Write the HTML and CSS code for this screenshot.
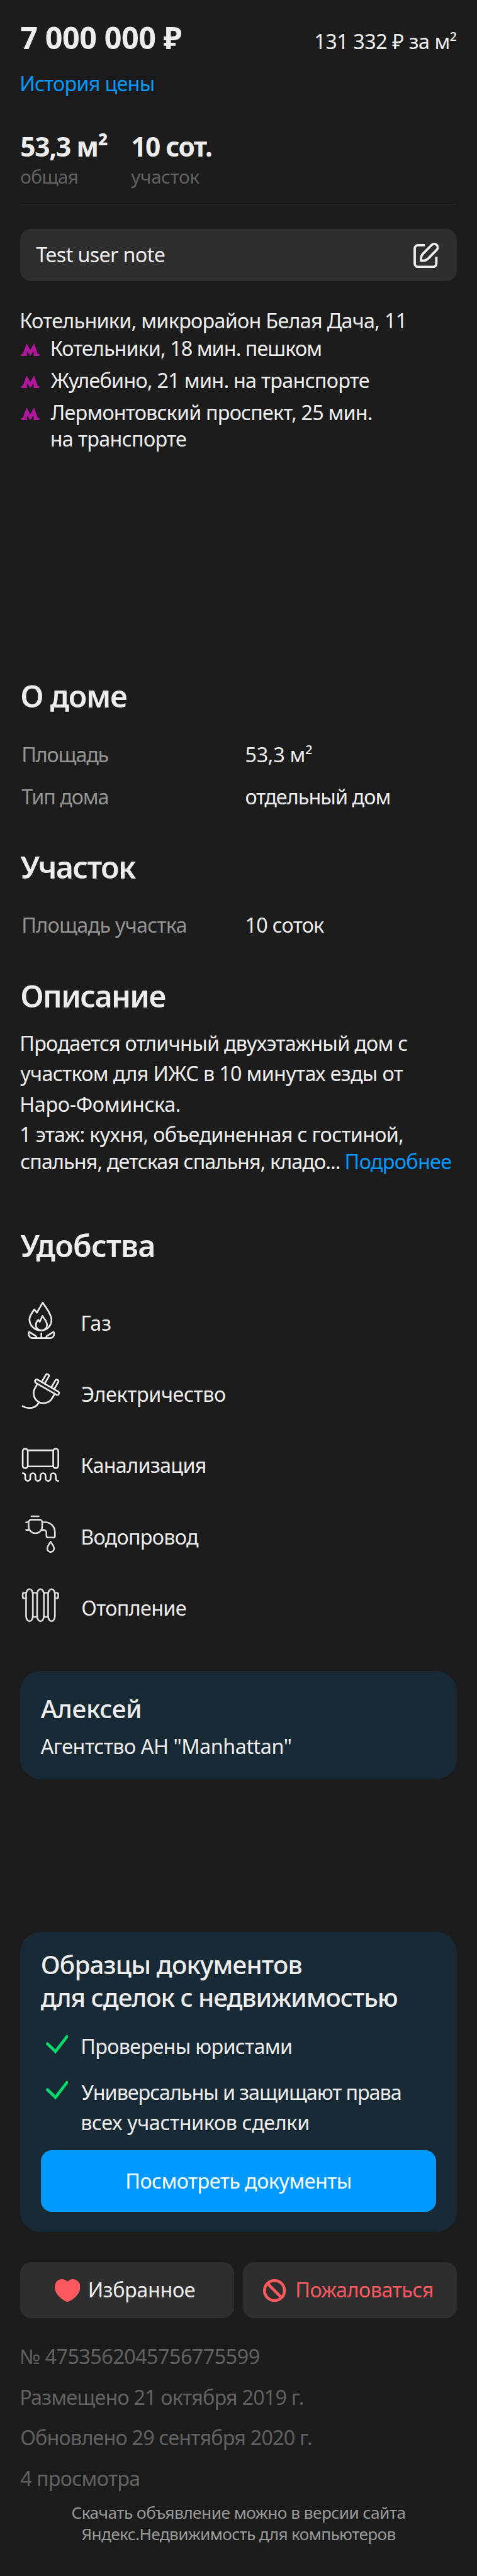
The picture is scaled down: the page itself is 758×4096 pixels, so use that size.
FILE: index.html
```html
<!DOCTYPE html>
<html lang="ru">
<head>
<meta charset="utf-8">
<title>Объявление</title>
<link rel="stylesheet" href="styles.css">
</head>
<body>
<main class="page">
  <header class="price-row">
    <h1 class="price k07">7 000 000 ₽</h1>
    <span class="rate k07">131 332 ₽ за м²</span>
  </header>
  <a class="history stem k11">История цены</a>
  <div class="facts">
    <div class="fact fact-area"><b class="fact-value k20">53,3 м²</b><span class="fact-label k11">общая</span></div>
    <div class="fact"><b class="fact-value k22">10 сот.</b><span class="fact-label k04">участок</span></div>
  </div>
  <div class="divider"></div>

  <div class="note">
    <span class="note-text k10">Test user note</span>
    <svg class="note-icon" viewBox="0 0 60 60" fill="none" stroke="#ededed" stroke-width="5.7"><path d="M26.7 5.8H11a8 8 0 0 0-8 8V49a8 8 0 0 0 8 8H46a8 8 0 0 0 8-8V33"/><path d="M43 5.2L22 26.5Q18 31 18 36V42H24.5Q29.5 42 33.7 38.2L54.8 17A8.3 8.3 0 0 0 43 5.2Z"/></svg>
  </div>

  <p class="address stem k11">Котельники, микрорайон Белая Дача, 11</p>
  <ul class="metros">
    <li class="metro"><svg class="metro-icon" viewBox="0 0 42 30" fill="#b2179e"><path d="M12.3 0L21 15.5 30 0 38.700 25H42V29.700H28.700V25H29.700L28 19 21 29.700 14 19 12.300 25H13.300V29.700H0V25H3.300Z"/></svg><span class="stem k14">Котельники, 18 мин. пешком</span></li>
    <li class="metro"><svg class="metro-icon" viewBox="0 0 42 30" fill="#b2179e"><path d="M12.3 0L21 15.5 30 0 38.700 25H42V29.700H28.700V25H29.700L28 19 21 29.700 14 19 12.300 25H13.300V29.700H0V25H3.300Z"/></svg><span class="k11">Жулебино, 21 мин. на транспорте</span></li>
    <li class="metro"><svg class="metro-icon" viewBox="0 0 42 30" fill="#b2179e"><path d="M12.3 0L21 15.5 30 0 38.700 25H42V29.700H28.700V25H29.700L28 19 21 29.700 14 19 12.300 25H13.300V29.700H0V25H3.300Z"/></svg><span><span class="k12">Лермонтовский проспект, 25 мин.</span><br><span class="stem k10">на транспорте</span></span></li>
  </ul>

  <section class="section section-house">
    <h2 class="k20">О доме</h2>
    <dl class="props">
      <dt class="k18">Площадь</dt><dd class="k04">53,3 м²</dd>
      <dt class="k16">Тип дома</dt><dd class="k14">отдельный дом</dd>
    </dl>
  </section>
  <section class="section">
    <h2 class="k25">Участок</h2>
    <dl class="props">
      <dt class="k11">Площадь участка</dt><dd class="k11">10 соток</dd>
    </dl>
  </section>
  <section class="section">
    <h2 class="k24">Описание</h2>
    <div class="desc">
      <p class="stem k11">Продается отличный двухэтажный дом с</p>
      <p class="k10">участком для ИЖС в 10 минутах езды от</p>
      <p class="stem k05">Наро-Фоминска.</p>
      <p class="stem k10">1 этаж: кухня, объединенная с гостиной,</p>
      <p class="desc-last"><span class="k13">спальня, детская спальня, кладо...</span> <a class="more k10">Подробнее</a></p>
    </div>
  </section>

  <section class="section section-amenities">
    <h2 class="k12">Удобства</h2>
    <ul class="amenities">
      <li class="amenity">
        <svg class="amenity-icon" viewBox="0 0 96 96"><path d="M53.4 6C58 15 74 33 74 46.5C74 62 62.5 72 49 72C34 72 22 60 22 46C22 38 27 31 33.4 22.5L39.5 30Z"/><path d="M52.7 37.5C56 44 63.5 51 63.5 59C63.5 66.5 58 72 50.5 72C43 72 37 66.5 37 59C37 54 39.5 50.5 42.7 47L46.3 51.5Z"/><path d="M38 88V86L23.5 76.5C21.5 75 20 76 20 78V80C20 86 24 90 30 90H70C76 90 80 86 80 80V78C80 76 78.5 75 76.5 76.5L62 86V88M50 79V90"/></svg>
        <span class="stem">Газ</span></li>
      <li class="amenity">
        <svg class="amenity-icon" viewBox="0 0 96 96"><g transform="translate(63.4 36.7) rotate(30)"><rect x="-32.2" y="-4.3" width="64.4" height="8.6" rx="4.3"/><path d="M-17-4.3V-23.3a4 4 0 0 1 8 0V-4.3M9-4.3V-23.3a4 4 0 0 1 8 0V-4.3M-23.5 4.3V16A23.5 24 0 0 0 23.5 16V4.3"/></g><path d="M44 73.5C39.5 81.5 31 86 21 86C15 86 10 84 5.8 81.5"/></svg>
        <span class="k06">Электричество</span></li>
      <li class="amenity">
        <svg class="amenity-icon" viewBox="0 0 96 96"><rect x="6" y="14" width="12" height="46" rx="6"/><rect x="78" y="14" width="12" height="46" rx="6"/><path d="M18 18H78M18 56H78M6 72c4 0 6 2.5 6 6v6a6 6 0 0 0 12 0v-6a6 6 0 0 1 12 0v6a6 6 0 0 0 12 0v-6a6 6 0 0 1 12 0v6a6 6 0 0 0 12 0v-6a6 6 0 0 1 12 0v6c0 3.5 2 6 6 6"/></svg>
        <span class="stem k10">Канализация</span></li>
      <li class="amenity">
        <svg class="amenity-icon dim" viewBox="0 0 96 96"><path d="M26.5 6H43.8M26 14H46a6 6 0 0 1 6 6V30A16 16 0 0 1 20 30V20a6 6 0 0 1 6-6ZM14 20H20M14 38H22M52 20H59C72 20 82 30 82 44V53a3 3 0 0 1-3 3H66a4 4 0 0 1-4-4V45C62 41 59 38 55 38H50M72 66C74 70 80 76 80 82A8 8 0 0 1 64 82C64 76 70 70 72 66Z"/></svg>
        <span class="stem k11">Водопровод</span></li>
      <li class="amenity">
        <svg class="amenity-icon dim" viewBox="0 0 96 96"><rect x="14" y="10" width="16" height="76" rx="8" ry="13"/><rect x="40" y="10" width="16" height="76" rx="8" ry="13"/><rect x="66" y="10" width="16" height="76" rx="8" ry="13"/><path d="M30 18.5H40M56 18.5H66M30 75.7H40M56 75.7H66M14 18.5H10a4 4 0 0 0-4 4V28a4 4 0 0 0 4 4H14M82 18.5H86a4 4 0 0 1 4 4V28a4 4 0 0 1-4 4H82"/></svg>
        <span class="k10">Отопление</span></li>
    </ul>
  </section>

  <section class="card author">
    <h3 class="k05">Алексей</h3>
    <p class="k07">Агентство АН "Manhattan"</p>
  </section>

  <section class="card docs">
    <h3><span class="k12">Образцы документов</span><br><span class="k16">для сделок с недвижимостью</span></h3>
    <ul class="checks">
      <li class="check"><svg class="check-icon" viewBox="0 0 53 45" fill="none" stroke="#00dc6b" stroke-width="7" stroke-linecap="round"><path d="M3.6 20.5L22.5 38.5 49.5 3.5"/></svg><span class="stem k10">Проверены юристами</span></li>
      <li class="check"><svg class="check-icon" viewBox="0 0 53 45" fill="none" stroke="#00dc6b" stroke-width="7" stroke-linecap="round"><path d="M3.6 20.5L22.5 38.5 49.5 3.5"/></svg><span><span class="k16">Универсальны и защищают права</span><br><span class="stem k06">всех участников сделки</span></span></li>
    </ul>
    <button class="docs-button k08">Посмотреть документы</button>
  </section>

  <div class="actions">
    <button class="action fav"><svg class="heart" viewBox="0 0 60 54" fill="#ff5960"><path d="M30 6C27 2 22 0 17 0C7 0 0 8 0 19C0 33 12 46 27.5 53.2Q30 54.5 32.5 53.2C48 46 60 33 60 19C60 8 53 0 43 0C38 0 33 2 30 6Z"/></svg><span class="k06">Избранное</span></button>
    <button class="action report"><svg class="ban" viewBox="0 0 54 54" fill="none" stroke="#ff5960" stroke-width="6.8"><circle cx="27" cy="27" r="23.6"/><path d="M11 11L43 43"/></svg><span class="k07">Пожаловаться</span></button>
  </div>

  <div class="meta">
    <p class="stem k08">№ 4753562045756775599</p>
    <p class="stem k12">Размещено 21 октября 2019 г.</p>
    <p class="k12">Обновлено 29 сентября 2020 г.</p>
    <p class="k10">4 просмотра</p>
  </div>
  <footer class="footer"><span class="k08">Скачать объявление можно в версии сайта</span><br><span class="k10">Яндекс.Недвижимость для компьютеров</span></footer>
</main>
</body>
</html>
```
FILE: styles.css
```css
html { font-size: 6.7378px; background: #1c1c1c; }
body { margin: 0; }
h1, h2, h3, p, ul, dl, dd { margin: 0; padding: 0; }
ul { list-style: none; }
svg { display: block; flex: none; }

.page {
  box-sizing: border-box;
  height: 4096px;
  overflow: hidden;
  padding: 4.57rem 4.8rem 0;
  background: #1c1c1c;
  color: #ededed;
  font: 400 4.8rem/6rem "Noto Sans", sans-serif;
  white-space: nowrap;
}
button { padding: 0; border: 0; font: inherit; color: inherit; }

/* Tracking steps */
.k04 { letter-spacing: -.04rem; }
.k05 { letter-spacing: -.05rem; }
.k06 { letter-spacing: -.058rem; }
.k07 { letter-spacing: -.068rem; }
.k08 { letter-spacing: -.08rem; }
.k10 { letter-spacing: -.1rem; }
.k11 { letter-spacing: -.108rem; }
.k12 { letter-spacing: -.122rem; }
.k13 { letter-spacing: -.137rem; }
.k14 { letter-spacing: -.14rem; }
.k16 { letter-spacing: -.158rem; }
.k18 { letter-spacing: -.179rem; }
.k20 { letter-spacing: -.2rem; }
.k22 { letter-spacing: -.227rem; }
.k24 { letter-spacing: -.243rem; }
.k25 { letter-spacing: -.25rem; }

.stem { margin-left: -.17rem; }

.price-row { display: flex; justify-content: space-between; align-items: baseline; height: 8.4rem; }
.price { font-size: 7.2rem; line-height: 8.4rem; font-weight: 700; }
.history { display: block; margin-top: 3.6rem; color: #09f; }
.facts { display: flex; margin-top: 8.38rem; }
.fact { display: flex; flex-direction: column; }
.fact-area { width: 26.1rem; }
.fact-value { font-size: 6.3rem; line-height: 7.2rem; font-weight: 700; }
.fact-label { margin-top: .83rem; font-size: 4.4rem; line-height: 5.4rem; color: #616161; }
.divider { height: 1px; margin-top: 3.64rem; background: #303030; }

.note {
  display: flex;
  align-items: center;
  justify-content: space-between;
  box-sizing: border-box;
  height: 12.3rem;
  margin-top: 5.92rem;
  padding: 0 4.2rem 0 3.7rem;
  border-radius: 2.6rem;
  background: #2e2e2e;
}
.note-text { padding-bottom: .45rem; }
.note-icon { width: 6rem; height: 6rem; }

.address { margin-top: 6.2rem; }
.metros { display: flex; flex-direction: column; gap: 1.42rem; margin-top: .54rem; }
.metro { display: flex; line-height: 6.16rem; }
.metro-icon { width: 4.2rem; height: 3rem; margin: 1.87rem 2.7rem 0 .3rem; }

.section { margin-top: 9.46rem; }
.section-house { margin-top: 53.46rem; }
h2 { font-size: 7.2rem; line-height: 8.4rem; font-weight: 600; }
.props { display: grid; grid-template-columns: 52.7rem auto; justify-content: start; row-gap: 3.91rem; margin-top: 6.53rem; padding-left: .3rem; }
dt { color: #949494; }

.desc { margin-top: 3.34rem; line-height: 7.2rem; }
.desc-last { line-height: 5.4rem; }
.more { margin-left: -.2rem; color: #09f; }

.section-amenities { margin-top: 12.97rem; }
.amenities { display: flex; flex-direction: column; gap: 7.2rem; margin-top: 8.79rem; }
.amenity { display: flex; align-items: flex-start; height: 9.6rem; }
.amenity-icon { width: 9.6rem; height: 9.6rem; margin-right: 4.8rem; fill: none; stroke: #ededed; stroke-width: 3.9; stroke-linecap: round; stroke-linejoin: round; }
.amenity-icon.dim { stroke: #dcdcdc; }
.amenity > span { padding-top: 2.34rem; }

.card { box-sizing: border-box; border-radius: 4.8rem; padding: 0 4.8rem; background: #192a37; }
h3 { font-size: 6rem; line-height: 7.8rem; font-weight: 500; }
.author { height: 25.5rem; margin-top: 10.8rem; padding-top: 5.03rem; }
.author p { margin-top: 1.81rem; }

.docs { height: 70.77rem; margin-top: 36rem; padding-top: 3.83rem; }
.checks { display: flex; flex-direction: column; gap: 3.54rem; margin-top: 3.86rem; line-height: 7.26rem; }
.check { display: flex; }
.check-icon { width: 5.3rem; height: 4.5rem; margin: 1.05rem 3.1rem 0 1.2rem; }
.docs-button { display: block; width: 100%; height: 14.4rem; margin-top: 2.99rem; padding-bottom: .3rem; border-radius: 2.6rem; background: #09f; color: #fff; }

.actions { display: grid; grid-template-columns: 1fr 1fr; gap: 2.1rem; height: 13.22rem; margin-top: 7.23rem; }
.action { display: flex; align-items: center; border-radius: 2.6rem; background: #2e2e2e; }
.action span { padding-bottom: .38rem; }
.fav { padding-left: 8.1rem; }
.heart { width: 6rem; height: 5.4rem; margin-right: 1.85rem; }
.report { padding-left: 4.8rem; color: #ff5960; }
.ban { width: 5.4rem; height: 5.4rem; margin-right: 2.15rem; }

.meta { margin-top: 4.07rem; line-height: 9.62rem; color: #616161; }
.footer { margin-top: .84rem; font-size: 3.9rem; line-height: 5.04rem; text-align: center; color: #999; }
```
